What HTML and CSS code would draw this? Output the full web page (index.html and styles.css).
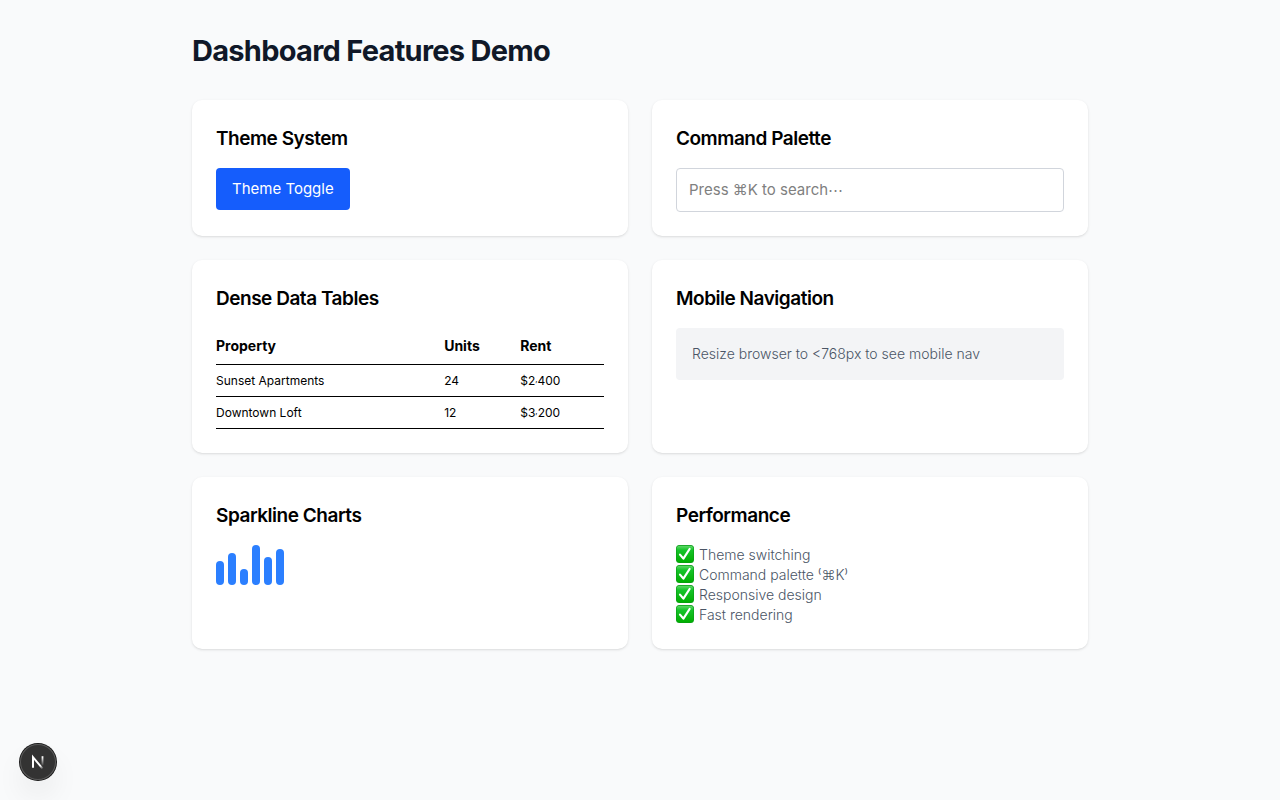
FILE: index.html
```html
<!DOCTYPE html>
<html lang="en">
<head>
<meta charset="utf-8">
<meta name="viewport" content="width=device-width, initial-scale=1">
<title>Dashboard Features Demo</title>
<link rel="stylesheet" href="styles.css">
</head>
<body>
<svg class="symbols" width="0" height="0" aria-hidden="true">
  <defs>
    <linearGradient id="green" x1="0" y1="0" x2="0" y2="1">
      <stop offset="0" stop-color="#5fd968"/>
      <stop offset=".25" stop-color="#16c42a"/>
      <stop offset="1" stop-color="#00ae00"/>
    </linearGradient>
  </defs>
  <symbol id="check" viewBox="0 0 18 18">
    <rect width="18" height="18" rx="3.5" fill="#0a9a18"/>
    <rect x=".6" y=".8" width="16.8" height="16.6" rx="3" fill="url(#green)"/>
    <path d="M4 9.6 7.4 13.6 13.6 4" fill="none" stroke="#fff" stroke-width="2.2" stroke-linecap="round" stroke-linejoin="round"/>
  </symbol>
</svg>
<main class="page">
  <h1 class="page-title">Dashboard Features Demo</h1>
  <div class="grid">
    <section class="card">
      <h2 class="card-title">Theme System</h2>
      <button class="button" type="button">Theme Toggle</button>
    </section>
    <section class="card">
      <h2 class="card-title">Command Palette</h2>
      <input class="search" type="text" aria-label="Command palette search" placeholder="Press ⌘K to search⋯">
    </section>
    <section class="card">
      <h2 class="card-title">Dense Data Tables</h2>
      <table class="table">
        <thead>
          <tr><th scope="col" class="col-property">Property</th><th scope="col" class="col-units">Units</th><th scope="col">Rent</th></tr>
        </thead>
        <tbody>
          <tr><td>Sunset Apartments</td><td>24</td><td>$2<span class="comma">,</span>400</td></tr>
          <tr><td>Downtown Loft</td><td>12</td><td>$3<span class="comma">,</span>200</td></tr>
        </tbody>
      </table>
    </section>
    <section class="card">
      <h2 class="card-title">Mobile Navigation</h2>
      <p class="note">Resize browser to &lt;768px to see mobile nav</p>
    </section>
    <section class="card">
      <h2 class="card-title">Sparkline Charts</h2>
      <div class="sparkline">
        <span class="bar" style="height:60%"></span>
        <span class="bar" style="height:80%"></span>
        <span class="bar" style="height:40%"></span>
        <span class="bar" style="height:100%"></span>
        <span class="bar" style="height:70%"></span>
        <span class="bar" style="height:90%"></span>
      </div>
    </section>
    <section class="card">
      <h2 class="card-title">Performance</h2>
      <ul class="checks">
        <li><svg class="check" aria-hidden="true"><use href="#check"/></svg><span>Theme switching</span></li>
        <li><svg class="check" aria-hidden="true"><use href="#check"/></svg><span>Command palette <span class="raised">(</span>⌘K<span class="raised">)</span></span></li>
        <li><svg class="check" aria-hidden="true"><use href="#check"/></svg><span>Responsive design</span></li>
        <li><svg class="check" aria-hidden="true"><use href="#check"/></svg><span>Fast rendering</span></li>
      </ul>
    </section>
  </div>
</main>
<button class="dev-badge" type="button" aria-label="Open developer tools">
  <svg width="36" height="36" viewBox="0 0 36 36" fill="none">
    <defs>
      <linearGradient id="diag" x1="18" y1="18" x2="23" y2="25" gradientUnits="userSpaceOnUse">
        <stop offset=".5" stop-color="#fff"/><stop offset="1" stop-color="#fff" stop-opacity="0"/>
      </linearGradient>
      <linearGradient id="stem" x1="22" y1="13" x2="22" y2="22" gradientUnits="userSpaceOnUse">
        <stop stop-color="#fff"/><stop offset="1" stop-color="#fff" stop-opacity="0"/>
      </linearGradient>
    </defs>
    <path d="M13 23.8V13.2L22.6 24.6" stroke="url(#diag)" stroke-width="2"/>
    <path d="M22.5 12.2V21.5" stroke="url(#stem)" stroke-width="1.8"/>
  </svg>
</button>
</body>
</html>
```
FILE: styles.css
```css
* { box-sizing: border-box; }

body {
  margin: 0;
  background: #f9fafb;
  color: #000;
  font-family: Inter, sans-serif;
  font-size: 15px;
  line-height: 26px;
}

.symbols { position: absolute; }

.page {
  max-width: 960px;
  margin: 0 auto;
  padding: 32px;
}

.page-title {
  margin: 0 0 30px;
  color: #101828;
  font-size: 29px;
  font-weight: 700;
  line-height: 38px;
  letter-spacing: -0.025em;
}

.grid {
  display: grid;
  grid-template-columns: repeat(2, 1fr);
  gap: 24px;
}

.card {
  padding: 24px;
  border-radius: 10px;
  background: #fff;
  box-shadow: 0 1px 3px rgba(0, 0, 0, 0.1), 0 1px 2px -1px rgba(0, 0, 0, 0.1);
}

.card-title {
  margin: 0 0 14px;
  font-size: 19px;
  font-weight: 600;
  line-height: 30px;
  letter-spacing: -0.025em;
}

.button {
  display: block;
  padding: 8px 16px;
  border: 0;
  border-radius: 4px;
  background: #155dfc;
  color: #fff;
  font: inherit;
}

.search {
  display: block;
  width: 100%;
  padding: 8px 12px;
  border: 1px solid #d1d5dc;
  border-radius: 4px;
  background: #fff;
  font: inherit;
}

.search::placeholder { color: #808080; }

.table {
  width: 100%;
  border-collapse: collapse;
  text-align: left;
}

.table th,
.table td {
  padding: 8px 0;
  border-bottom: 1px solid #000;
}

.table th { font-size: 14px; font-weight: 700; line-height: 20px; }
.table td { font-size: 12px; line-height: 15px; }

.col-property { width: 58.8%; }
.col-units { width: 19.6%; }

.raised { font-feature-settings: "sups"; }

.comma {
  font-size: 8px;
  line-height: 1;
  vertical-align: 3px;
}

.note {
  margin: 0;
  padding: 16px;
  border-radius: 4px;
  background: #f3f4f6;
  color: #4a5565;
  font-size: 14px;
  font-weight: 350;
  line-height: 20px;
}

.sparkline {
  display: flex;
  align-items: flex-end;
  gap: 4px;
  height: 40px;
}

.bar {
  width: 8px;
  border-radius: 999px;
  background: #2b7fff;
}

.checks {
  margin: 0;
  padding: 0;
  list-style: none;
  color: #4a5565;
  font-size: 14px;
  font-weight: 350;
  line-height: 20px;
}

.checks li {
  display: flex;
  gap: 5px;
}

.check {
  width: 18px;
  height: 18px;
}

.dev-badge {
  position: fixed;
  bottom: 20px;
  left: 20px;
  width: 36px;
  height: 36px;
  padding: 0;
  border: 0;
  border-radius: 50%;
  background: #333;
  box-shadow: 0 0 0 1px #171717, inset 0 0 0 1px #5a5a5a, 0 16px 32px -8px rgba(0, 0, 0, 0.2);
}

.dev-badge svg { display: block; }

@media (max-width: 767px) {
  .grid { grid-template-columns: 1fr; }
}
```
